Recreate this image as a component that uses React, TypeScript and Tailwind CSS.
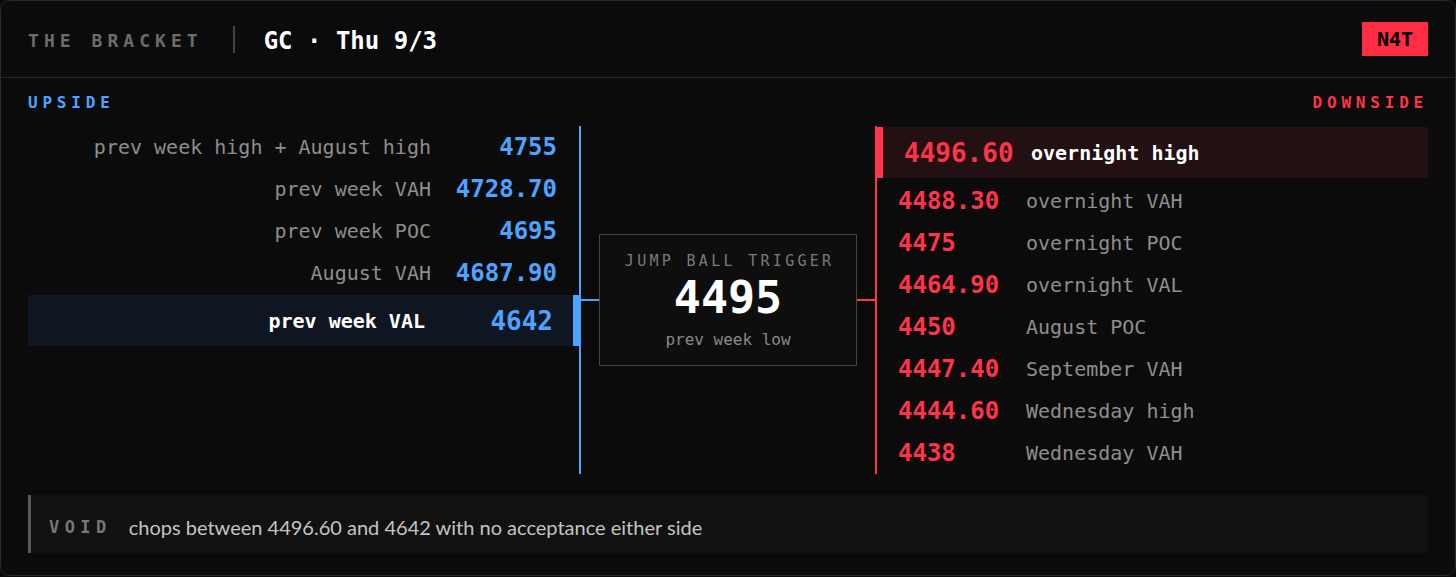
export default function App() {
  const up: [string, string][] = [
    ["prev week high + August high", "4755"],
    ["prev week VAH", "4728.70"],
    ["prev week POC", "4695"],
    ["August VAH", "4687.90"],
  ];
  const down: [string, string][] = [
    ["4488.30", "overnight VAH"],
    ["4475", "overnight POC"],
    ["4464.90", "overnight VAL"],
    ["4450", "August POC"],
    ["4447.40", "September VAH"],
    ["4444.60", "Wednesday high"],
    ["4438", "Wednesday VAH"],
  ];
  return (
    <div className="min-h-screen bg-[#0b0b0b] font-['DejaVu_Sans_Mono',monospace]">
      <div className="h-[576px] rounded-[10px] border border-[#2a2a2a] bg-[#0b0b0b] flex flex-col">
        <header className="h-[77px] shrink-0 border-b border-[#262626] px-[27px] flex items-center justify-between">
          <div className="flex items-center">
            <span className="pt-[4px] text-[18px] leading-[18px] font-bold tracking-[0.28em] text-[#6c6c6c]">
              THE BRACKET
            </span>
            <span className="ml-[30px] w-[2px] h-[27px] bg-[#444444]" />
            <span className="ml-[29px] pt-[4px] text-[24px] leading-[24px] font-bold text-white">
              GC · Thu 9/3
            </span>
          </div>
          <div className="h-[34px] px-[15px] bg-[#ff2d44] flex items-center text-[20px] leading-[20px] font-bold text-black">
            N4T
          </div>
        </header>

        <div className="px-[27px] pt-[17px] flex flex-col">
          <div className="flex justify-between text-[16px] leading-[16px] font-bold tracking-[0.3em]">
            <span className="text-[#4da3ff]">UPSIDE</span>
            <span className="text-[#ff3349]">DOWNSIDE</span>
          </div>

          <div className="mt-[15px] h-[348px] grid grid-cols-[551px_298px_551px]">
            {/* upside */}
            <div className="flex flex-col">
              {up.map(([label, num]) => (
                <div key={num} className="h-[42px] flex items-center justify-end gap-[16px] pr-[22px]">
                  <span className="text-[20px] leading-[24px] text-[#8e8e8e]">{label}</span>
                  <span className="w-[110px] text-right text-[24px] leading-[28px] font-bold text-[#4da3ff]">
                    {num}
                  </span>
                </div>
              ))}
              <div className="mt-[1px] h-[51px] bg-[#0f1621] border-r-[6px] border-[#4da3ff] flex items-center justify-end gap-[18px] pr-[20px]">
                <span className="text-[20px] leading-[24px] font-bold text-white">prev week VAL</span>
                <span className="w-[110px] text-right text-[26px] leading-[30px] font-bold text-[#4da3ff]">
                  4642
                </span>
              </div>
            </div>

            {/* center */}
            <div className="border-l-2 border-l-[#4da3ff] border-r-2 border-r-[#ff3349] flex items-center">
              <div className="w-[18px] h-[2px] bg-[#4da3ff]" />
              <div className="w-[258px] h-[132px] border border-[#444444] bg-[#0e0e0e] flex flex-col items-center pt-[17px]">
                <span className="text-[15px] leading-[18px] tracking-[0.22em] pl-[0.22em] text-[#7a7a7a]">
                  JUMP BALL TRIGGER
                </span>
                <span className="mt-[6px] text-[45px] leading-[44px] font-bold text-white">4495</span>
                <span className="mt-[10px] text-[16px] leading-[20px] text-[#8a8a8a]">prev week low</span>
              </div>
              <div className="w-[18px] h-[2px] bg-[#ff3349]" />
            </div>

            {/* downside */}
            <div className="flex flex-col">
              <div className="mt-[1px] mb-[2px] h-[51px] bg-[#221013] border-l-[6px] border-[#ff3349] flex items-center gap-[15px] pl-[21px]">
                <span className="w-[112px] text-[26px] leading-[30px] font-bold text-[#ff3349]">4496.60</span>
                <span className="text-[20px] leading-[24px] font-bold text-white">overnight high</span>
              </div>
              {down.map(([num, label]) => (
                <div key={num} className="h-[42px] flex items-center gap-[16px] pl-[21px]">
                  <span className="w-[112px] text-[24px] leading-[28px] font-bold text-[#ff3349]">{num}</span>
                  <span className="text-[20px] leading-[24px] text-[#8e8e8e]">{label}</span>
                </div>
              ))}
            </div>
          </div>

          <div className="mt-[21px] h-[58px] border-l-[3px] border-[#5a5a5a] bg-[#111111] flex items-center pl-[18px] pt-[6px]">
            <span className="text-[17px] leading-[20px] font-bold tracking-[0.32em] text-[#777777]">VOID</span>
            <span className="ml-[17px] font-['Lato',sans-serif] text-[20px] leading-[22px] text-[#c4c4c4]">
              chops between 4496.60 and 4642 with no acceptance either side
            </span>
          </div>
        </div>
      </div>
    </div>
  );
}
